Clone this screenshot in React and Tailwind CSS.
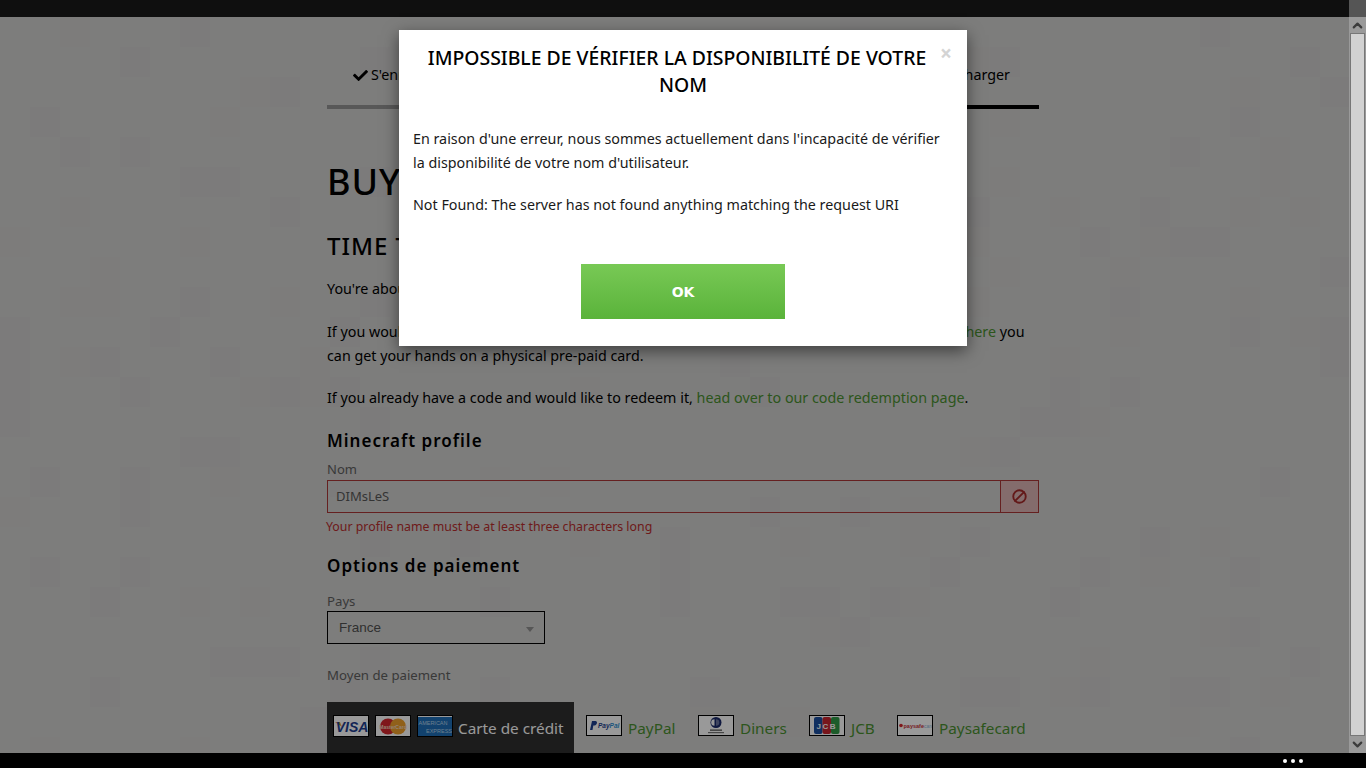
import React from 'react';
import { Ban, ChevronUp, ChevronDown } from 'lucide-react';
import { FaCheck } from 'react-icons/fa';

// faint grey tiles behind the page, 30px squares
const tiles = [];
let seed = 7;
for (let y = 0; y < 26; y++) {
  for (let x = 0; x < 46; x++) {
    seed = (seed * 16807) % 2147483647;
    if (seed % 6 === 0) tiles.push({ x: x * 30, y: y * 30, o: 0.003 + (seed % 5) * 0.0015 });
  }
}

const CardFrame = ({ children, className = '' }) => (
  <span className={`flex h-[21px] w-[36px] shrink-0 items-center justify-center overflow-hidden border border-black bg-white ${className}`}>
    <svg width="34" height="19" viewBox="0 0 34 19">{children}</svg>
  </span>
);

const sans = 'Liberation Sans, sans-serif';

const Visa = () => (
  <CardFrame className="h-[22px]">
    <path d="M1 5 L6 5 L8 10 Z" fill="#e8a33a" />
    <text x="18" y="15" textAnchor="middle" fontFamily={sans} fontSize="14" fontWeight="700" fontStyle="italic" fill="#1f3f8f">VISA</text>
  </CardFrame>
);

const MasterCard = () => (
  <CardFrame className="h-[22px]">
    <circle cx="12" cy="9.5" r="8" fill="#d4272e" />
    <circle cx="22" cy="9.5" r="8" fill="#f0a02c" />
    <text x="17" y="11.5" textAnchor="middle" fontFamily={sans} fontSize="5" fontWeight="700" fill="#f5d9c0">MasterCard</text>
  </CardFrame>
);

const Amex = () => (
  <CardFrame className="h-[22px]">
    <rect width="34" height="19" fill="#1e6fb8" />
    <text x="15" y="8" textAnchor="middle" fontFamily={sans} fontSize="5.5" fill="#b8d4ea">AMERICAN</text>
    <text x="21" y="16" textAnchor="middle" fontFamily={sans} fontSize="5.5" fill="#b8d4ea">EXPRESS</text>
  </CardFrame>
);

const PayPal = () => (
  <CardFrame>
    <path d="M3 14 L5 5 H8.5 C10.8 5 10.5 9 7.5 9.5 H6.3 L5.5 14 Z" fill="#1f3f8f" />
    <text x="11" y="12" fontFamily={sans} fontSize="6.5" fontWeight="700" fontStyle="italic" fill="#1f3f8f">Pay<tspan fill="#2f8fd0">Pal</tspan></text>
  </CardFrame>
);

const Diners = () => (
  <CardFrame>
    <circle cx="17" cy="6.5" r="5.5" fill="#1b2a6b" />
    <path d="M15.5 3.2 A3.3 3.3 0 0 0 15.5 9.8 Z" fill="#fff" />
    <path d="M17 3.2 A3.3 3.3 0 0 1 17 9.8 Z" fill="#fff" opacity="0.35" />
    <rect x="11" y="13.5" width="12" height="1.3" fill="#555" />
    <rect x="9" y="16" width="16" height="1.2" fill="#777" />
  </CardFrame>
);

const Jcb = () => (
  <CardFrame>
    <rect x="4" y="1" width="8.5" height="17" rx="2" fill="#1b4fa0" />
    <rect x="12.5" y="1" width="8.5" height="17" rx="2" fill="#c9252f" />
    <rect x="21" y="1" width="8.5" height="17" rx="2" fill="#2f9a46" />
    <text x="16.7" y="12.5" textAnchor="middle" fontFamily={sans} fontSize="8" fontWeight="700" letterSpacing="1.5" fill="#fff">JCB</text>
  </CardFrame>
);

const Paysafe = () => (
  <CardFrame>
    <circle cx="3" cy="9.5" r="1.8" fill="#d4272e" />
    <text x="5.5" y="11.5" fontFamily={sans} fontSize="5.5" fontWeight="700" fill="#c6303a">paysafe</text>
    <text x="26" y="11.5" fontFamily={sans} fontSize="5" fill="#8fb7d8">card</text>
  </CardFrame>
);

const payments = [
  { label: 'PayPal', icon: <PayPal />, width: 'w-[112px]' },
  { label: 'Diners', icon: <Diners />, width: 'w-[111px]' },
  { label: 'JCB', icon: <Jcb />, width: 'w-[88px]' },
  { label: 'Paysafecard', icon: <Paysafe />, width: 'w-[130px]' },
];

const App = () => {
  return (
    <div className="relative flex h-screen w-full flex-col overflow-hidden bg-[#d1d0cf] font-['Noto_Sans',sans-serif] text-black">
      <div className="h-[17px] shrink-0 bg-[#1a1a1a]"></div>

      {/* page behind the dialog */}
      <main className="relative min-h-0 flex-1 overflow-hidden">
        <svg className="absolute inset-0" width="1366" height="740">
          {tiles.map((t, i) => (
            <rect key={i} x={t.x} y={t.y} width="30" height="30" fill="#102030" fillOpacity={t.o} />
          ))}
        </svg>

        <div className="relative mx-auto w-[712px]">
          {/* steps */}
          <div className="flex h-[92px] text-[14.3px] leading-[22px]">
            <div className="flex h-full w-[240px] border-b-4 border-[#939393] pl-[26px] pt-[47px]">
              <span className="flex items-center gap-[3px] self-start">
                <FaCheck size={15} />
                S'enregistrer
              </span>
            </div>
            <div className="flex h-full w-[232px] justify-center border-b-4 border-[#939393] pt-[47px]">
              Acheter
            </div>
            <div className="flex h-full w-[240px] justify-end border-b-4 border-black pr-[29px] pt-[47px]">
              Télécharger
            </div>
          </div>

          <h1 className="mt-[46px] text-[36px] font-medium leading-[54px] tracking-[1px]">BUY MINECRAFT</h1>
          <h2 className="mt-[19px] text-[24px] font-medium leading-[36px] tracking-[1px]">TIME TO BUY</h2>

          <p className="mt-[13px] text-[14.3px] leading-[24px]">You're about to buy Minecraft for the computer.</p>
          <p className="mt-[19px] text-[14.3px] leading-[24px]">
            If you would like to buy a gift code for someone else, you can do it in a moment, or{' '}
            <a className="ml-[80px] text-[#4a8f30]">here</a> you can get your hands on a physical pre-paid card.
          </p>
          <p className="mt-[18px] text-[14.3px] leading-[24px]">
            If you already have a code and would like to redeem it,{' '}
            <a className="text-[#4a8f30]">head over to our code redemption page</a>.
          </p>

          <h3 className="mt-[18px] text-[17px] font-semibold leading-[26px] tracking-[1px]">Minecraft profile</h3>

          <label className="mt-[6px] block text-[13px] leading-[18px] text-[#606060]">Nom</label>
          <div className="mt-[2px] flex h-[33px] border border-[#a83636]">
            <div className="flex flex-1 items-center pl-[8px] pt-px text-[13px] text-[#585858]">DIMsLeS</div>
            <div className="flex w-[38px] items-center justify-center border-l border-[#a83636] bg-[#dcb4b4] text-[#a52a2a]">
              <Ban size={15} strokeWidth={3} className="-scale-x-100" />
            </div>
          </div>
          <p className="mt-[5px] -ml-px text-[12.35px] leading-[18px] text-[#b82e2e]">Your profile name must be at least three characters long</p>

          <h3 className="mt-[17px] text-[17px] font-semibold leading-[26px] tracking-[1px]">Options de paiement</h3>

          <label className="mt-[13px] block text-[13.2px] leading-[18px] text-[#606060]">Pays</label>
          <div className="mt-px flex h-[33px] w-[218px] items-center justify-between border border-black pl-[11px] pr-[10px] pt-px font-['Liberation_Sans',sans-serif] text-[13.5px] text-[#505050]">
            France
            <span className="mt-[2px] h-0 w-0 border-x-[4px] border-t-[5px] border-x-transparent border-t-[#8f8f8f]"></span>
          </div>

          <p className="mt-[22px] text-[13.2px] leading-[18px] text-[#606060]">Moyen de paiement</p>

          {/* payment methods */}
          <div className="mt-[18px] flex h-[60px] items-start">
            <div className="flex h-full w-[247px] shrink-0 gap-[5px] bg-[#303030] pl-[6px] pt-[13px] text-[15.3px] leading-[24px] text-white">
              <div className="flex h-[22px] gap-[6px]">
                <Visa />
                <MasterCard />
                <Amex />
              </div>
              <span className="mt-[1px]">Carte de crédit</span>
            </div>
            <div className="ml-[12px] flex pt-[13px] text-[15.3px] leading-[24px] text-[#4a8f30]">
              {payments.map((p) => (
                <div key={p.label} className={`flex gap-[6px] ${p.width}`}>
                  {p.icon}
                  <span className="mt-[1px]">{p.label}</span>
                </div>
              ))}
            </div>
          </div>
        </div>
      </main>

      <div className="h-[15px] shrink-0 bg-black"></div>

      {/* backdrop */}
      <div className="absolute inset-0 bg-black/40"></div>

      {/* window scrollbar */}
      <div className="absolute bottom-[15px] right-0 top-0 flex w-[17px] flex-col bg-[#9a9a9a]">
        <div className="h-[17px] shrink-0 bg-[#555]"></div>
        <div className="flex h-[16px] shrink-0 items-center justify-center text-[#3c3c3c]">
          <ChevronUp size={15} strokeWidth={3.5} />
        </div>
        <div className="mx-px min-h-0 flex-1 border border-[#777] bg-[#d2d2d2]"></div>
        <div className="flex h-[17px] shrink-0 items-center justify-center text-[#3c3c3c]">
          <ChevronDown size={15} strokeWidth={3.5} />
        </div>
      </div>

      {/* three dots in the bottom bar */}
      <div className="absolute bottom-[5px] right-[63px] flex gap-[4px]">
        <span className="h-1 w-1 rounded-full bg-white"></span>
        <span className="h-1 w-1 rounded-full bg-white"></span>
        <span className="h-1 w-1 rounded-full bg-white"></span>
      </div>

      {/* dialog */}
      <div className="absolute left-[399px] top-[30px] h-[316px] w-[568px] bg-white pl-[15px] pr-[15px] pt-[14px] shadow-[0_5px_15px_rgba(0,0,0,0.5)]">
        <h4 className="text-center text-[19.4px] font-medium leading-[27px]">
          <span className="float-right -mt-px w-[12px] text-center text-[21px] font-bold leading-[21px] text-[#d4d4d4]">×</span>
          IMPOSSIBLE DE VÉRIFIER LA DISPONIBILITÉ DE VOTRE NOM
        </h4>
        <p className="-ml-px mt-[29px] text-[14.3px] leading-[24px] text-[#1a1a1a]">
          En raison d'une erreur, nous sommes actuellement dans l'incapacité de vérifier la disponibilité de votre nom d'utilisateur.
        </p>
        <p className="-ml-px mt-[18px] text-[14.3px] leading-[24px] text-[#1a1a1a]">
          Not Found: The server has not found anything matching the request URI
        </p>
        <button className="mx-auto mt-[47px] block h-[55px] w-[204px] bg-gradient-to-b from-[#78c955] to-[#5ab33a] pt-[1px] font-['DejaVu_Sans',sans-serif] text-[14px] font-bold text-white">
          OK
        </button>
      </div>
    </div>
  );
};

export default App;
